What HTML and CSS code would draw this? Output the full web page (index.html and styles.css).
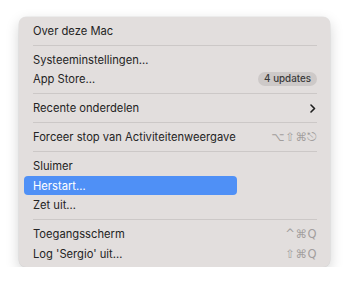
FILE: index.html
```html
<!DOCTYPE html>
<html lang="nl">
<head>
    <meta charset="UTF-8">
    <meta name="viewport" content="width=device-width, initial-scale=1.0">
    <title>Apple-menu</title>
    <link rel="stylesheet" href="styles.css">
</head>
<body>
    <div class="menu">
        <div class="item">Over deze Mac</div>
        <div class="sep"></div>
        <div class="item">Systeeminstellingen…</div>
        <div class="item">App Store…<span class="badge">4 updates</span></div>
        <div class="sep"></div>
        <div class="item">Recente onderdelen
            <svg class="chevron" width="6" height="9" viewBox="0 0 6 9"><path d="M1 1l3.5 3.5L1 8" fill="none" stroke="#1f1f1f" stroke-width="1.6" stroke-linecap="round" stroke-linejoin="round"/></svg>
        </div>
        <div class="sep"></div>
        <div class="item">Forceer stop van Activiteitenweergave<span class="keys">⌥⇧⌘⎋</span></div>
        <div class="sep"></div>
        <div class="item">Sluimer</div>
        <div class="item active">Herstart…</div>
        <div class="item">Zet uit…</div>
        <div class="sep"></div>
        <div class="item">Toegangsscherm<span class="keys">^⌘Q</span></div>
        <div class="item">Log 'Sergio' uit…<span class="keys">⇧⌘Q</span></div>
    </div>
</body>
</html>
```

FILE: styles.css
```css
body {
    margin: 0;
    padding: 17px 0 0 19px;
    background: #ffffff;
    font-family: "Inter", "Noto Sans", sans-serif;
}
.menu {
    width: 311px;
    padding: 4px 0 4px;
    background: #e2dedd;
    border-radius: 7px;
    box-shadow: 0 0 0 0.5px rgba(0, 0, 0, 0.08), 0 5px 14px rgba(0, 0, 0, 0.18);
    color: #242424;
    font-size: 11.2px;
}
.item {
    display: flex;
    align-items: center;
    justify-content: space-between;
    height: 19.5px;
    margin: 0 5px;
    padding: 0 8px 0 9px;
    border-radius: 4px;
    white-space: nowrap;
}
.item.active {
    width: 196px;
    background: #4f90f6;
    color: #ffffff;
}
.sep {
    height: 0.8px;
    margin: 4.4px 13px 4.3px 14px;
    background: #ccc8c7;
}
.badge {
    padding: 1px 6px;
    border-radius: 7px;
    background: #cdc9c8;
    color: #3a3a3a;
    font-size: 9.8px;
    font-weight: 500;
    line-height: 12px;
}
.chevron {
    margin-right: 1px;
}
.keys {
    font-family: "DejaVu Sans", sans-serif;
    font-size: 11.5px;
    letter-spacing: 0.5px;
    color: #a29e9d;
}
```
